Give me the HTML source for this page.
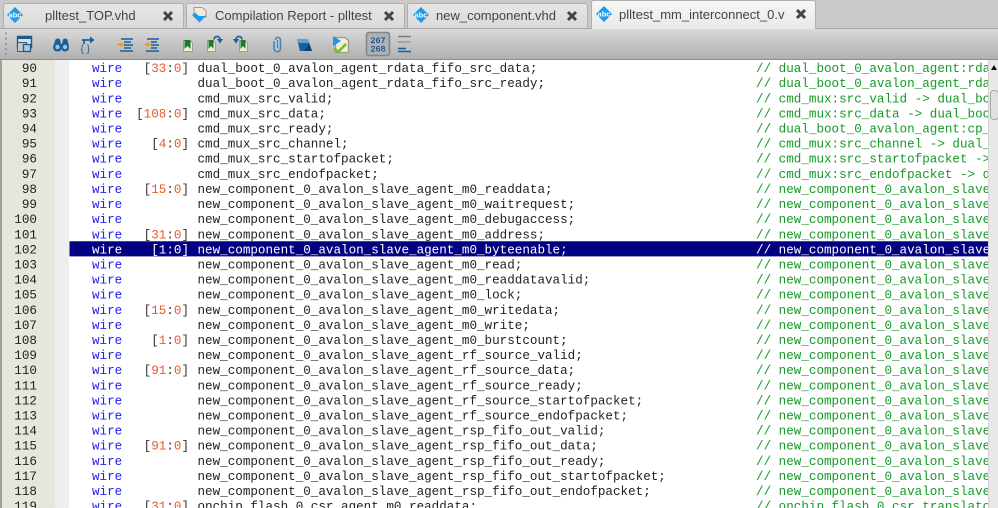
<!DOCTYPE html>
<html><head><meta charset="utf-8"><style>
html,body{margin:0;padding:0;width:998px;height:508px;overflow:hidden;background:#c8c8c8}
#w{position:relative;width:998px;height:508px;overflow:hidden;font-family:"Liberation Sans",sans-serif;background:#c9c9c9;filter:blur(0.3px)}
.tab{position:absolute;top:3px;height:25px;background:linear-gradient(#e6e6e6,#d9d9d9);border:1px solid #b0b0b0;border-bottom:0;border-radius:3px 3px 0 0;box-sizing:border-box;font-size:13px;color:#444;line-height:24px}
.tab span{position:absolute;top:0;white-space:nowrap}
.tab svg,.tb{position:absolute}
#bar{position:absolute;left:0;top:28px;width:998px;height:2px;background:#a8a8a8}
#tool{position:absolute;left:0;top:29px;width:998px;height:31px;background:linear-gradient(#d8d8d8,#b0b0b0);border-bottom:1px solid #8c8c8c;box-sizing:border-box}
#ed{position:absolute;left:0;top:60px;width:998px;height:448px;background:#fff;overflow:hidden}
#gut{position:absolute;left:2px;top:0;width:53px;height:448px;background:#e6e6dc}
#fold{position:absolute;left:55px;top:0;width:14px;height:448px;background-color:#f6f6f6;background-image:linear-gradient(45deg,#e8e8e8 25%,transparent 25%,transparent 75%,#e8e8e8 75%),linear-gradient(45deg,#e8e8e8 25%,transparent 25%,transparent 75%,#e8e8e8 75%);background-size:2px 2px;background-position:0 0,1px 1px}
#edge{position:absolute;left:0;top:0;width:2px;height:448px;background:#a0a0a0}
#code{position:absolute;left:0;top:0.4px;width:981px;font:12.5px/15px "Liberation Mono",monospace;color:#222;transform:scale(1.0071);transform-origin:0 0}
.r{position:relative;height:15px;white-space:pre}
.r>*{position:absolute;top:1.7px;font-style:normal;font-weight:normal;text-decoration:none}
.n{right:944.3px;color:#222}
.k{left:91.35px;color:#2222f0}
.g{right:793.3px;color:#333}
.g s{text-decoration:none;color:#f0552a}
.v{left:196.1px}
.c{left:750.7px;color:#159a26}
.sel::before{content:"";position:absolute;left:68.5px;top:0;width:912.5px;height:15px;background:#000080}
.sel .k,.sel .g,.sel .v,.sel .c{color:#fff}
.sel .g s{color:#fff}
#sb{position:absolute;left:988px;top:0;width:10px;height:448px;background:#e8e8e8;border-left:1px solid #d4d4d4;box-sizing:border-box}
#th{position:absolute;left:1px;top:30px;width:9px;height:30px;background:#e0e0e0;border:1px solid #a8a8a8;border-radius:4px;box-sizing:border-box}
#ar{position:absolute;left:2px;top:5px;width:0;height:0;border-left:3.5px solid transparent;border-right:3.5px solid transparent;border-bottom:5px solid #111}
</style></head><body><div id="w">

<div class="tab" style="left:3px;width:181px">
<svg style="left:2px;top:2px" width="18" height="18" viewBox="0 0 18 18"><path d="M9 1 17 9 9 17 1 9Z" fill="#1d9be8"/><text x="9" y="11.5" font-size="7.5" font-family="Liberation Sans" fill="#fff" text-anchor="middle" font-weight="bold">abc</text></svg>
<span style="left:41px">plltest_TOP.vhd</span>
<svg style="left:158px;top:6px" width="12" height="12" viewBox="0 0 12 12"><path d="M2 2 10 10M10 2 2 10" stroke="#444" stroke-width="3"/></svg>
</div>
<div class="tab" style="left:186px;width:219px">
<svg style="left:4px;top:0" width="18" height="22" viewBox="0 0 18 22"><path d="M3 3.500H11L15 6.500V13H3Z" fill="#f2ebdc" stroke="#a89a88"/><path d="M8.500 18.500 1 11 4 8.500 8 12H13L16 11Z" fill="#1d9be8"/></svg>
<span style="left:28px">Compilation Report - plltest</span>
<svg style="left:196px;top:6px" width="12" height="12" viewBox="0 0 12 12"><path d="M2 2 10 10M10 2 2 10" stroke="#444" stroke-width="3"/></svg>
</div>
<div class="tab" style="left:407px;width:181px">
<svg style="left:3.5px;top:2px" width="18" height="18" viewBox="0 0 18 18"><path d="M9 1 17 9 9 17 1 9Z" fill="#1d9be8"/><text x="9" y="11.5" font-size="7.5" font-family="Liberation Sans" fill="#fff" text-anchor="middle" font-weight="bold">abc</text></svg>
<span style="left:28px">new_component.vhd</span>
<svg style="left:158px;top:6px" width="12" height="12" viewBox="0 0 12 12"><path d="M2 2 10 10M10 2 2 10" stroke="#444" stroke-width="3"/></svg>
</div>
<div id="bar"></div>
<div id="tool">
<svg class="tb" style="left:0;top:0" width="998" height="30" viewBox="0 0 998 30">
<g fill="#999"><rect x="5" y="3.500" width="2" height="2"/><rect x="5" y="8.500" width="2" height="2"/><rect x="5" y="14" width="2" height="2"/><rect x="5" y="19" width="2" height="2"/><rect x="5" y="24" width="2" height="2"/></g>
<!-- window icon -->
<path d="M17.500 7.500H31.500V18.500H17.500Z" fill="#cfe0ee" stroke="#1d5a92" stroke-width="1.400"/><rect x="17" y="7" width="15" height="3" fill="#1d5a92"/>
<path d="M17.500 13.500H26.500V22.500H17.500Z" fill="#c6c6c6" stroke="#555"/><path d="M23.500 15.500H30.500V22.500H23.500Z" fill="#a9c8e2" stroke="#1d5a92" stroke-width="1.300"/>
<!-- binoculars -->
<path d="M55.500 10.500Q58 8.500 60 10.500L61 15H62L63 10.500Q65 8.500 67.500 10.500L69 18Q69 22.500 65 22.500 61.500 22.500 61.500 19 61.500 22.500 58 22.500 53 22.500 53 18Z" fill="#17609c"/><circle cx="57.500" cy="18" r="2.200" fill="#9cc4e2"/><circle cx="65" cy="18" r="2.200" fill="#9cc4e2"/>
<!-- braces arrow -->
<path d="M82 11H91M84 11V15" stroke="#17609c" stroke-width="1.700" fill="none"/><path d="M90 7.500 94.500 11 90 14.500Z" fill="#17609c"/>
<text x="80.500" y="23" font-size="10" font-family="Liberation Sans" fill="#17609c">{ }</text>
<!-- indent -->
<g stroke="#17609c" stroke-width="1.500"><path d="M121 10H133M124 13H131M124 16H133M124 19H131M120 22H133"/></g><path d="M117 15.500H121" stroke="#f0a020" stroke-width="2"/><path d="M120.500 12.500 124 15.500 120.500 18.500Z" fill="#f0a020"/>
<g stroke="#17609c" stroke-width="1.500"><path d="M147 10H159M151 13H157M151 16H159M151 19H157M146 22H159"/></g><path d="M147 15.500H151" stroke="#f0a020" stroke-width="2"/><path d="M148 12.500 144.500 15.500 148 18.500Z" fill="#f0a020"/>
<!-- bookmarks -->
<path d="M183.500 11.500H190L192.500 14V22.500H183.500Z" fill="#f3ecd9" stroke="#a89a88"/><path d="M184.500 11H190.500V20L187.500 17 184.500 20Z" fill="#1c7a2c"/>
<path d="M207.500 11.500H213L215.500 14V22.500H207.500Z" fill="#f3ecd9" stroke="#a89a88"/><path d="M208.500 11H213.500V20L211 17 208.500 20Z" fill="#1c7a2c"/>
<path d="M214 10.500C214 6.500 220 6.500 220 10.500" stroke="#17609c" stroke-width="1.700" fill="none"/><path d="M217 10 220 14.500 223 10Z" fill="#17609c"/>
<path d="M239.500 11.500H245L247.500 14V22.500H239.500Z" fill="#f3ecd9" stroke="#a89a88"/><path d="M240.500 11H245.500V20L243 17 240.500 20Z" fill="#1c7a2c"/>
<path d="M242 10.500C242 6.500 236 6.500 236 10.500" stroke="#17609c" stroke-width="1.700" fill="none"/><path d="M233 10 236 14.500 239 10Z" fill="#17609c"/>
<!-- paperclip -->
<path d="M275.500 11C275.500 7.500 280.500 7.500 280.500 11V19C280.500 24 274 24 274 19V12" stroke="#3d86c0" stroke-width="1.600" fill="none"/><path d="M277.500 11V19" stroke="#3d86c0" stroke-width="1.200"/>
<!-- block -->
<path d="M297 10H308L312 22H300Z" fill="#17609c"/><path d="M297 10H308L309 14H298.500Z" fill="#5aa4dc"/><path d="M304 22 312 22 309 15Z" fill="#0f3f6e"/>
<!-- doc tick -->
<path d="M335.500 8.500H345L348.500 11.500V23.500H335.500Z" fill="#f3ecd9" stroke="#a8968a" stroke-width="1.300"/><path d="M333 7 341 12 333 17Z" fill="#2196e8"/><path d="M334 19 338 23 346 15" stroke="#6cc02c" stroke-width="2.600" fill="none"/>
<!-- line numbers toggle -->
<rect x="366.500" y="3.500" width="23" height="23" rx="2.500" fill="#adb2b6" stroke="#858585" stroke-width="1.600"/>
<text x="378" y="14" font-size="8.500" font-family="Liberation Mono" fill="#174e82" stroke="#174e82" stroke-width="0.200" text-anchor="middle">267</text>
<text x="378" y="22.500" font-size="8.500" font-family="Liberation Mono" fill="#174e82" stroke="#174e82" stroke-width="0.200" text-anchor="middle">268</text>
<!-- lines -->
<g stroke-width="1.500"><path d="M398 7.500H411" stroke="#6f7f8e"/><path d="M398 13H411" stroke="#999"/><path d="M398 19.500H406" stroke="#17609c"/><path d="M398 22.500H411" stroke="#17609c"/></g>
</svg>
</div>
<div class="tab" style="left:591px;top:0;width:225px;height:29px;background:linear-gradient(#f6f6f6,#e9e9e9);line-height:27px">
<svg style="left:2.500px;top:4px" width="18" height="18" viewBox="0 0 18 18"><path d="M9 1 17 9 9 17 1 9Z" fill="#1d9be8"/><text x="9" y="11.5" font-size="7.5" font-family="Liberation Sans" fill="#fff" text-anchor="middle" font-weight="bold">abc</text></svg>
<span style="left:27px">plltest_mm_interconnect_0.v</span>
<svg style="left:202.500px;top:7px" width="12" height="12" viewBox="0 0 12 12"><path d="M2 2 10 10M10 2 2 10" stroke="#444" stroke-width="3"/></svg>
</div>

<div id="ed"><div id="edge"></div><div id="gut"></div><div id="fold"></div>
<div id="code">
<div class="r"><b class="n">90</b><i class="k">wire</i><u class="g">[<s>33</s>:<s>0</s>]</u><span class="v">dual_boot_0_avalon_agent_rdata_fifo_src_data;</span><em class="c">// dual_boot_0_avalon_agent:rdata_fifo</em></div>
<div class="r"><b class="n">91</b><i class="k">wire</i><span class="v">dual_boot_0_avalon_agent_rdata_fifo_src_ready;</span><em class="c">// dual_boot_0_avalon_agent_rdata_fifo</em></div>
<div class="r"><b class="n">92</b><i class="k">wire</i><span class="v">cmd_mux_src_valid;</span><em class="c">// cmd_mux:src_valid -> dual_boot_0</em></div>
<div class="r"><b class="n">93</b><i class="k">wire</i><u class="g">[<s>108</s>:<s>0</s>]</u><span class="v">cmd_mux_src_data;</span><em class="c">// cmd_mux:src_data -> dual_boot_0</em></div>
<div class="r"><b class="n">94</b><i class="k">wire</i><span class="v">cmd_mux_src_ready;</span><em class="c">// dual_boot_0_avalon_agent:cp_ready</em></div>
<div class="r"><b class="n">95</b><i class="k">wire</i><u class="g">[<s>4</s>:<s>0</s>]</u><span class="v">cmd_mux_src_channel;</span><em class="c">// cmd_mux:src_channel -> dual_boot_0</em></div>
<div class="r"><b class="n">96</b><i class="k">wire</i><span class="v">cmd_mux_src_startofpacket;</span><em class="c">// cmd_mux:src_startofpacket -> dual</em></div>
<div class="r"><b class="n">97</b><i class="k">wire</i><span class="v">cmd_mux_src_endofpacket;</span><em class="c">// cmd_mux:src_endofpacket -> dual</em></div>
<div class="r"><b class="n">98</b><i class="k">wire</i><u class="g">[<s>15</s>:<s>0</s>]</u><span class="v">new_component_0_avalon_slave_agent_m0_readdata;</span><em class="c">// new_component_0_avalon_slave_agent</em></div>
<div class="r"><b class="n">99</b><i class="k">wire</i><span class="v">new_component_0_avalon_slave_agent_m0_waitrequest;</span><em class="c">// new_component_0_avalon_slave_agent</em></div>
<div class="r"><b class="n">100</b><i class="k">wire</i><span class="v">new_component_0_avalon_slave_agent_m0_debugaccess;</span><em class="c">// new_component_0_avalon_slave_agent</em></div>
<div class="r"><b class="n">101</b><i class="k">wire</i><u class="g">[<s>31</s>:<s>0</s>]</u><span class="v">new_component_0_avalon_slave_agent_m0_address;</span><em class="c">// new_component_0_avalon_slave_agent</em></div>
<div class="r sel"><b class="n">102</b><i class="k">wire</i><u class="g">[<s>1</s>:<s>0</s>]</u><span class="v">new_component_0_avalon_slave_agent_m0_byteenable;</span><em class="c">// new_component_0_avalon_slave_agent</em></div>
<div class="r"><b class="n">103</b><i class="k">wire</i><span class="v">new_component_0_avalon_slave_agent_m0_read;</span><em class="c">// new_component_0_avalon_slave_agent</em></div>
<div class="r"><b class="n">104</b><i class="k">wire</i><span class="v">new_component_0_avalon_slave_agent_m0_readdatavalid;</span><em class="c">// new_component_0_avalon_slave_agent</em></div>
<div class="r"><b class="n">105</b><i class="k">wire</i><span class="v">new_component_0_avalon_slave_agent_m0_lock;</span><em class="c">// new_component_0_avalon_slave_agent</em></div>
<div class="r"><b class="n">106</b><i class="k">wire</i><u class="g">[<s>15</s>:<s>0</s>]</u><span class="v">new_component_0_avalon_slave_agent_m0_writedata;</span><em class="c">// new_component_0_avalon_slave_agent</em></div>
<div class="r"><b class="n">107</b><i class="k">wire</i><span class="v">new_component_0_avalon_slave_agent_m0_write;</span><em class="c">// new_component_0_avalon_slave_agent</em></div>
<div class="r"><b class="n">108</b><i class="k">wire</i><u class="g">[<s>1</s>:<s>0</s>]</u><span class="v">new_component_0_avalon_slave_agent_m0_burstcount;</span><em class="c">// new_component_0_avalon_slave_agent</em></div>
<div class="r"><b class="n">109</b><i class="k">wire</i><span class="v">new_component_0_avalon_slave_agent_rf_source_valid;</span><em class="c">// new_component_0_avalon_slave_agent</em></div>
<div class="r"><b class="n">110</b><i class="k">wire</i><u class="g">[<s>91</s>:<s>0</s>]</u><span class="v">new_component_0_avalon_slave_agent_rf_source_data;</span><em class="c">// new_component_0_avalon_slave_agent</em></div>
<div class="r"><b class="n">111</b><i class="k">wire</i><span class="v">new_component_0_avalon_slave_agent_rf_source_ready;</span><em class="c">// new_component_0_avalon_slave_agent</em></div>
<div class="r"><b class="n">112</b><i class="k">wire</i><span class="v">new_component_0_avalon_slave_agent_rf_source_startofpacket;</span><em class="c">// new_component_0_avalon_slave_agent</em></div>
<div class="r"><b class="n">113</b><i class="k">wire</i><span class="v">new_component_0_avalon_slave_agent_rf_source_endofpacket;</span><em class="c">// new_component_0_avalon_slave_agent</em></div>
<div class="r"><b class="n">114</b><i class="k">wire</i><span class="v">new_component_0_avalon_slave_agent_rsp_fifo_out_valid;</span><em class="c">// new_component_0_avalon_slave_agent</em></div>
<div class="r"><b class="n">115</b><i class="k">wire</i><u class="g">[<s>91</s>:<s>0</s>]</u><span class="v">new_component_0_avalon_slave_agent_rsp_fifo_out_data;</span><em class="c">// new_component_0_avalon_slave_agent</em></div>
<div class="r"><b class="n">116</b><i class="k">wire</i><span class="v">new_component_0_avalon_slave_agent_rsp_fifo_out_ready;</span><em class="c">// new_component_0_avalon_slave_agent</em></div>
<div class="r"><b class="n">117</b><i class="k">wire</i><span class="v">new_component_0_avalon_slave_agent_rsp_fifo_out_startofpacket;</span><em class="c">// new_component_0_avalon_slave_agent</em></div>
<div class="r"><b class="n">118</b><i class="k">wire</i><span class="v">new_component_0_avalon_slave_agent_rsp_fifo_out_endofpacket;</span><em class="c">// new_component_0_avalon_slave_agent</em></div>
<div class="r"><b class="n">119</b><i class="k">wire</i><u class="g">[<s>31</s>:<s>0</s>]</u><span class="v">onchip_flash_0_csr_agent_m0_readdata;</span><em class="c">// onchip_flash_0_csr_translator</em></div>
</div>
<div id="sb"><div id="ar"></div><div id="th"></div></div>
</div>
</div></body></html>
